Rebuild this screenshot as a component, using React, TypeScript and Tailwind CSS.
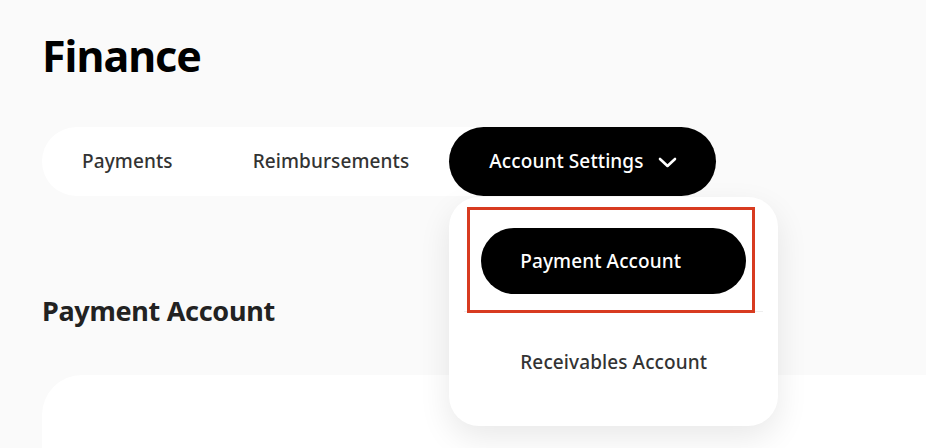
const font = { fontFamily: '"Noto Sans", "Open Sans", sans-serif' };

export default function App() {
    return (
        <div className="h-[448px] w-full overflow-hidden bg-[#fafafa] pl-[42px] text-[#333]" style={font}>
            <h1 className="pt-[34px] text-[43px] font-bold leading-none tracking-[-1px] text-black">Finance</h1>

            {/* Tabs */}
            <div className="relative mt-[50px] inline-flex h-[69px] items-center rounded-full bg-white">
                <button className="h-full px-[40px] text-[19px] font-medium tracking-[0.1px]">Payments</button>
                <button className="h-full px-[40px] text-[19px] font-medium tracking-[0.1px]">Reimbursements</button>
                <div className="relative h-full">
                    <button className="flex h-full items-center gap-[14px] rounded-full bg-black pl-[40px] pr-[39px] text-[19px] font-medium tracking-[0.1px] text-white">
                        Account Settings
                        <svg width="19" height="11" viewBox="0 0 19 11" fill="none" className="mt-[2px]">
                            <polyline points="2,2 9.5,9 17,2" stroke="currentColor" strokeWidth="2.6" strokeLinecap="round" strokeLinejoin="round" />
                        </svg>
                    </button>

                    {/* Dropdown */}
                    <div className="absolute left-0 top-[70px] z-10 w-[329px] rounded-[30px] bg-white px-[15px] py-[31px] shadow-[0_12px_32px_rgba(0,0,0,0.09)]">
                        <div className="relative border-b border-[#eeeeee] pb-[17px]">
                            <div className="mx-[17px] flex h-[66px] items-center rounded-full bg-black pl-[39px] text-[19px] font-medium tracking-[0.1px] text-white">
                                Payment Account
                            </div>
                            <div className="absolute -top-[21px] left-[3px] right-[8px] bottom-[-2px] border-[3px] border-[#d83b20]" />
                        </div>
                        <div className="mt-[17px] flex h-[66px] items-center pl-[56px] text-[19px] font-medium tracking-[0.1px]">
                            Receivables Account
                        </div>
                    </div>
                </div>
            </div>

            <h2 className="mt-[101px] text-[27px] font-bold leading-none tracking-[-0.3px] text-[#222]">Payment Account</h2>

            <div className="mt-[51px] h-[120px] rounded-tl-[40px] bg-white" />
        </div>
    );
}
